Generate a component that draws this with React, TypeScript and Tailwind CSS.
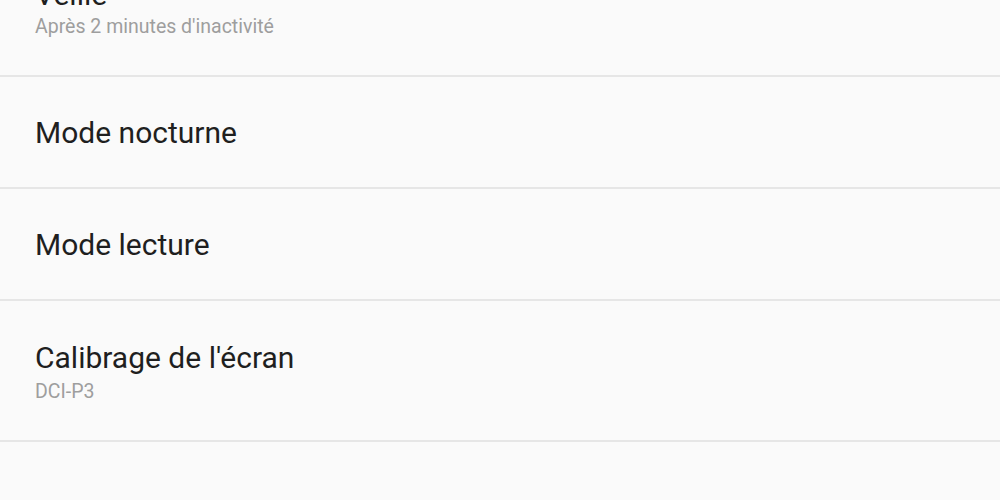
const items = [
  { title: "Veille", subtitle: "Après 2 minutes d'inactivité", row: "h-[139px] -mt-[62px]", gap: "mt-[2px]" },
  { title: "Mode nocturne", row: "h-[112px]" },
  { title: "Mode lecture", row: "h-[112px]" },
  { title: "Calibrage de l'écran", subtitle: "DCI-P3", row: "h-[141px]", gap: "mt-[4px]" },
];

export default function App() {
  return (
    <div
      className="w-[1000px] h-[500px] overflow-hidden bg-[#fafafa]"
      style={{ fontFamily: "Roboto, 'Noto Sans', sans-serif" }}
    >
      <div className="flex flex-col">
        {items.map((item) => (
          <div
            key={item.title}
            className={`${item.row} ${item.subtitle ? "pt-[39px]" : "pt-[38px]"} pl-[35px] border-b-2 border-[#e6e6e6] flex flex-col`}
          >
            <div className="text-[30px] leading-[36px] text-[#1f1f1f]">{item.title}</div>
            {item.subtitle && (
              <div className={`${item.gap} text-[19.5px] leading-[24px] text-[#9e9e9e]`}>
                {item.subtitle}
              </div>
            )}
          </div>
        ))}
      </div>
    </div>
  );
}
